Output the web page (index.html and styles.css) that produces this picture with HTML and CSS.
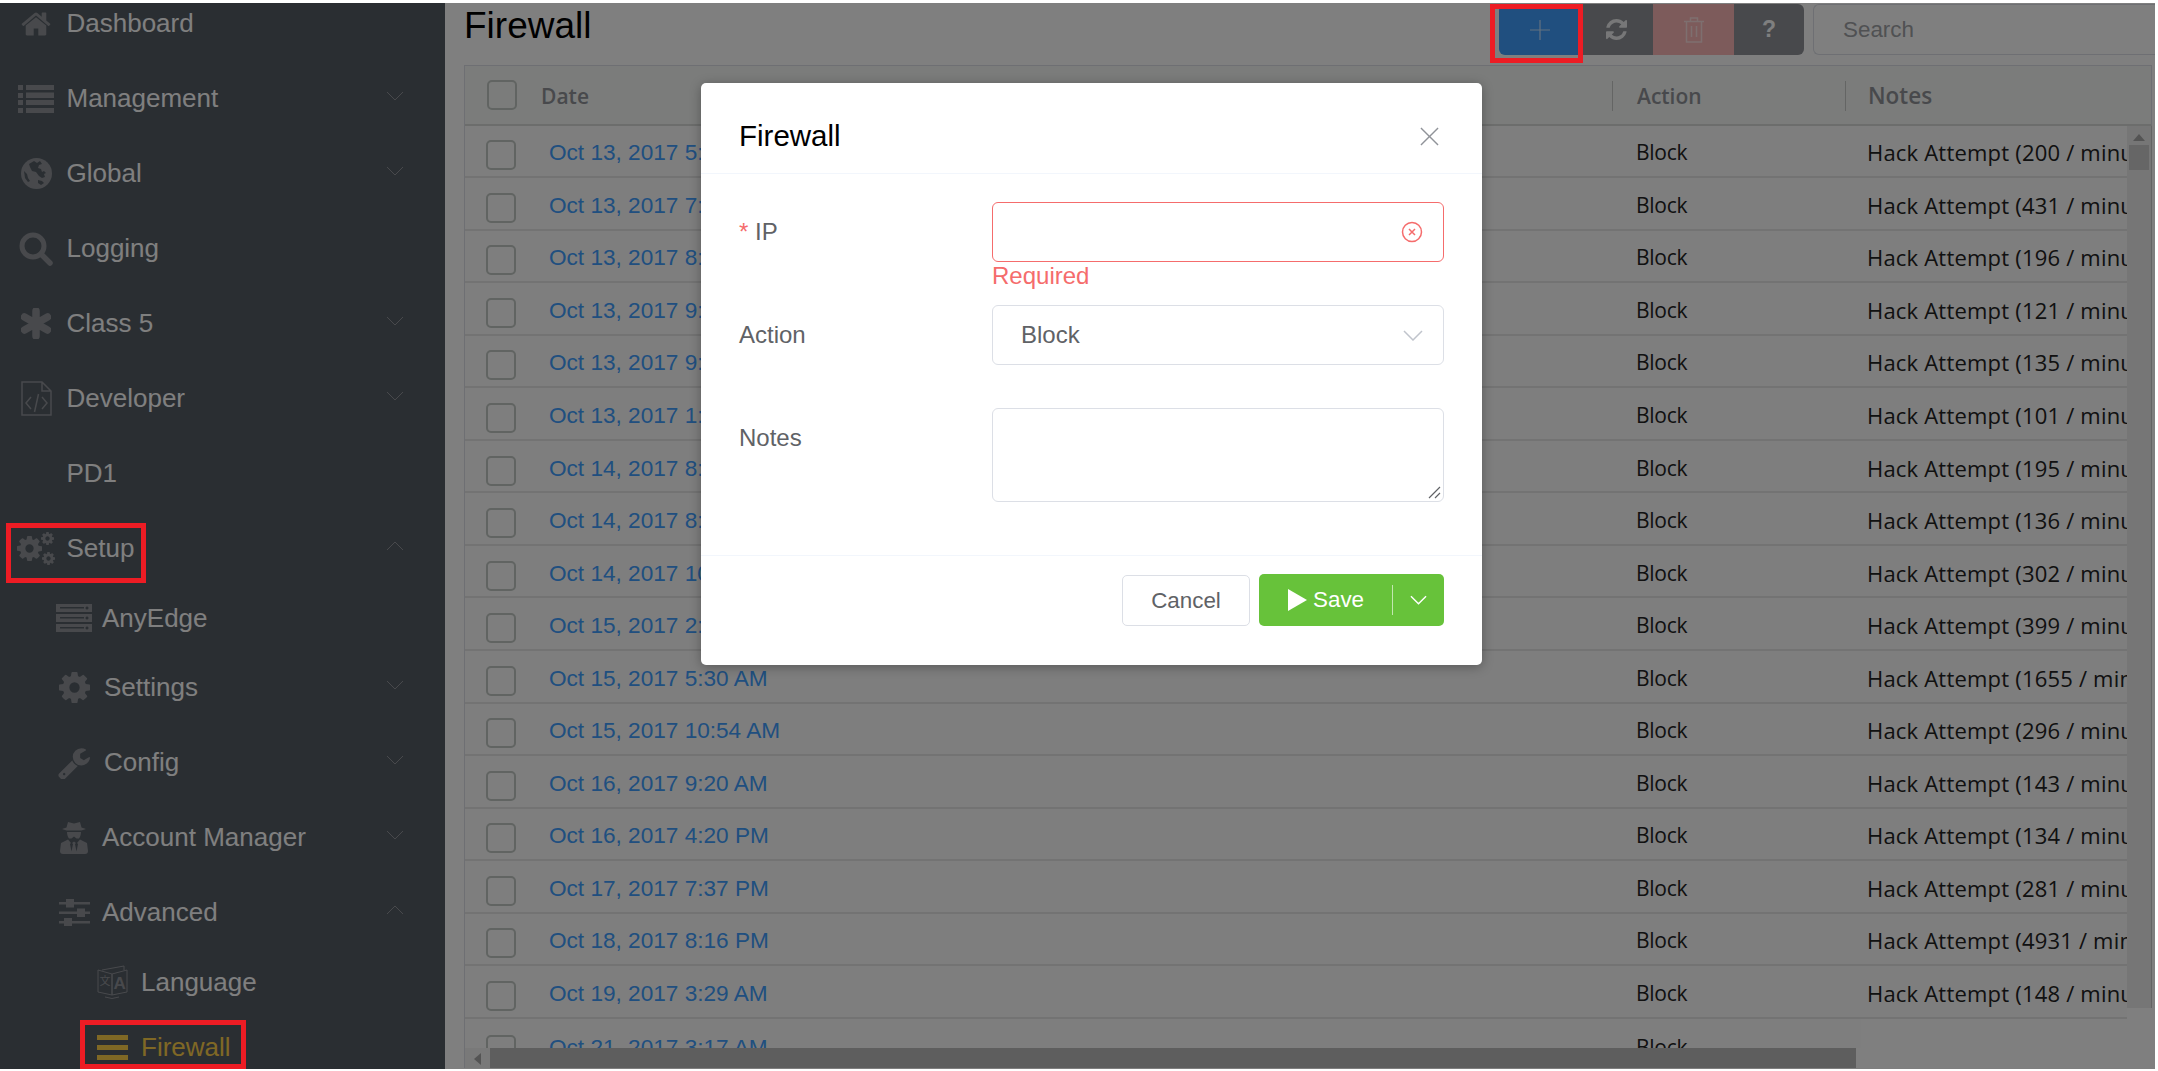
FILE: index.html
```html
<!DOCTYPE html>
<html>
<head>
    <meta charset="UTF-8">
    <meta name="viewport" content="width=device-width, initial-scale=1.0">
    <title>Firewall</title>

    <link rel="stylesheet" href="styles.css">
</head>

<body>
    <svg class="defs" aria-hidden="true">
        <symbol id="gear" viewBox="128 128 1536 1536"><path d="M1152 896q0-106-75-181t-181-75-181 75-75 181 75 181 181 75 181-75 75-181zm512-109v222q0 12-8 23t-20 13l-185 28q-19 54-39 91 35 50 107 138 10 12 10 25t-9 23q-27 37-99 108t-94 71q-12 0-26-9l-138-108q-44 23-91 38-16 136-29 186-7 28-36 28h-222q-14 0-24.5-8.5t-11.5-21.5l-28-184q-49-16-90-37l-141 107q-10 9-25 9-14 0-25-11-126-114-165-168-7-10-7-23 0-12 8-23 15-21 51-66.5t54-70.5q-27-50-41-99l-183-27q-13-2-21-12.5t-8-23.5v-222q0-12 8-23t19-13l186-28q14-46 39-92-40-57-107-138-10-12-10-24 0-10 9-23 26-36 98.5-107.5t94.5-71.5q13 0 26 10l138 107q44-23 91-38 16-136 29-186 7-28 36-28h222q14 0 24.5 8.5t11.5 21.5l28 184q49 16 90 37l142-107q9-9 24-9 13 0 25 10 129 119 165 170 7 8 7 22 0 12-8 23-15 21-51 66.5t-54 70.5q26 50 41 98l183 28q13 2 21 12.5t8 23.5z"/></symbol>
        <symbol id="chev-down" viewBox="0 0 18 10"><path d="M1 1l8 8 8-8" fill="none" stroke="currentColor" stroke-width="1"/></symbol>
        <symbol id="chev-up" viewBox="0 0 18 10"><path d="M1 9l8-8 8 8" fill="none" stroke="currentColor" stroke-width="1"/></symbol>
    </svg>

    <div class="page">
        <nav class="sidebar">
            <ul class="menu">
                <li class="menu-row">
                    <span class="icon"><svg width="32" height="32" viewBox="0 128 1792 1536"><path d="M1472 992v480q0 26-19 45t-45 19h-384v-384h-256v384h-384q-26 0-45-19t-19-45v-480q0-1 .5-3t.5-3l575-474 575 474q1 2 1 6zm223-69l-62 74q-8 9-21 11h-3q-13 0-21-7l-692-577-692 577q-12 8-24 7-13-2-21-11l-62-74q-8-10-7-23.5t11-21.5l719-599q32-26 76-26t76 26l244 204v-195q0-14 9-23t23-9h192q14 0 23 9t9 23v408l219 182q10 8 11 21.5t-7 23.5z"/></svg></span>
                    Dashboard
                </li>
                <li class="menu-row">
                    <span class="icon"><svg width="36" height="28" viewBox="0 0 36 28"><path d="M0 0h5v5H0zM8 0h28v5H8zM0 8h5v5H0zM8 7.500h28v5.500H8zM0 15h5v5H0zM8 15h28v5H8zM0 23h5v5H0zM8 23h28v5H8z"/></svg></span>
                    Management
                    <svg class="chev"><use href="#chev-down"/></svg>
                </li>
                <li class="menu-row">
                    <span class="icon"><svg width="31" height="31" viewBox="0 0 31 31"><circle cx="15.500" cy="15.500" r="15.500"/><path class="cut" d="M8 6l5-3 3 2 3-2 2 3-3 1-1 3 3 1 1 3 2-1 2 2-2 1 1 3-3 1-3-2-3-4-4-1-2-4zM17 22l4 1 2 2-3 2-3-2zM3 13l3 3 1 4 2 3-2 1-3-4z"/></svg></span>
                    Global
                    <svg class="chev"><use href="#chev-down"/></svg>
                </li>
                <li class="menu-row">
                    <span class="icon"><svg width="34" height="34" viewBox="0 0 34 34"><circle cx="14" cy="14" r="11" fill="none" stroke-width="5"/><path d="M22 22l9 9" fill="none" stroke-width="5.500" stroke-linecap="round"/></svg></span>
                    Logging
                </li>
                <li class="menu-row">
                    <span class="icon"><svg width="30" height="31" viewBox="0 0 30 31"><path d="M15 3v25M3.500 9l23 13M26.500 9l-23 13" fill="none" stroke-width="7.500" stroke-linecap="round"/></svg></span>
                    Class 5
                    <svg class="chev"><use href="#chev-down"/></svg>
                </li>
                <li class="menu-row">
                    <span class="icon"><svg width="31" height="35" viewBox="0 0 31 35"><path class="line" d="M1 1h20l9 9v24H1zM21 1v9h9M10 16l-5 6 5 6M21 16l5 6-5 6M17.500 13l-4 18"/></svg></span>
                    Developer
                    <svg class="chev"><use href="#chev-down"/></svg>
                </li>
                <li class="menu-row">
                    <span class="icon"></span>
                    PD1
                </li>
                <li class="menu-row">
                    <span class="icon"><svg width="38" height="34" viewBox="0 0 38 34"><use href="#gear" x="0" y="4" width="25" height="25"/><use href="#gear" x="24" y="0" width="13" height="13"/><use href="#gear" x="25" y="20" width="13" height="13"/></svg></span>
                    Setup
                    <svg class="chev"><use href="#chev-up"/></svg>
                </li>
                <li class="menu-row level2 leaf">
                    <span class="icon"><svg width="36" height="28" viewBox="0 0 36 28"><path fill-rule="evenodd" d="M0 0h36v8H0zM4 3v1.500h24V3zM31 2.500a1.500 1.500 0 1 0 .01 0zM0 10h36v8H0zM4 13v1.500h24V13zM31 12.500a1.500 1.500 0 1 0 .01 0zM0 20h36v8H0zM4 23v1.500h24V23zM31 22.500a1.500 1.500 0 1 0 .01 0z"/></svg></span>
                    AnyEdge
                </li>
                <li class="menu-row level2 wide">
                    <span class="icon"><svg width="31" height="31"><use href="#gear"/></svg></span>
                    Settings
                    <svg class="chev"><use href="#chev-down"/></svg>
                </li>
                <li class="menu-row level2 wide">
                    <span class="icon"><svg width="32" height="32" viewBox="64 64 1664 1664"><path d="M448 1472q0-26-19-45t-45-19-45 19-19 45 19 45 45 19 45-19 19-45zm644-420l-682 682q-37 37-90 37-52 0-91-37l-106-108q-38-36-38-90 0-53 38-91l681-681q39 98 114.500 173.500t173.500 114.500zm634-435q0 39-23 106-47 134-164.500 217.500t-258.500 83.500q-185 0-316.500-131.500t-131.500-316.500 131.500-316.500 316.500-131.500q58 0 121.500 16.500t107.500 46.500q16 11 16 28t-16 28l-293 169v224l193 107q5-3 79-48.500t135.500-81 70.500-35.500q15 0 23.500 10t8.500 25z"/></svg></span>
                    Config
                    <svg class="chev"><use href="#chev-down"/></svg>
                </li>
                <li class="menu-row level2">
                    <span class="icon"><svg width="28" height="33" viewBox="0 0 28 33"><path d="M8 1l6 1.500L20 1l1.500 5.500L26 8l-4.500 1.500h-15L2 8l4.500-1.500z"/><path d="M7 11h14c0 1.500-.5 5-2 6.500h-2.500L14 15.500l-2.500 2H9C7.500 16 7 12.500 7 11z"/><path fill-rule="evenodd" d="M8 18.500L1 22l-1 8q0 3 3 3h22q3 0 3-3l-1-8-7-3.500-3 3.500 1 1-1.500 7.500-1.500-7.500 1-1-2-1.500-2 1.500 1 1-1.500 7.500-1.500-7.500 1-1z"/></svg></span>
                    Account Manager
                    <svg class="chev"><use href="#chev-down"/></svg>
                </li>
                <li class="menu-row level2">
                    <span class="icon"><svg width="31" height="27" viewBox="0 0 31 27"><path d="M0 3h7V0h8v3h16v2.500H15v3H7v-3H0zM0 12.500h18V9.500h8v3h5V15h-5v3h-8v-3H0zM0 22h5v-3h8v3h18v2.500H13v2.500H5v-2.500H0z"/></svg></span>
                    Advanced
                    <svg class="chev"><use href="#chev-up"/></svg>
                </li>
                <li class="menu-row level3 leaf">
                    <span class="icon"><svg class="lang" width="31" height="35" viewBox="0 0 31 35"><path class="line" d="M1 5l14 4v21L1 27zM15 9l15-4 0 22-15 3zM5 5L27 1v4"/><path class="line" d="M8 32q7 3 14 0"/><text x="16.500" y="24" class="lang-a">A</text><text x="2.500" y="20" class="lang-z">文</text></svg></span>
                    Language
                </li>
                <li class="menu-row level3 leaf active">
                    <span class="icon"><svg width="31" height="25" viewBox="0 0 31 25"><path d="M0 0h31v5H0zM0 10h31v5H0zM0 20h31v5H0z"/></svg></span>
                    Firewall
                </li>
            </ul>
        </nav>

        <main class="content">
            <header class="topbar">
                <h1>Firewall</h1>
                <div class="btn-group">
                    <button class="tool add"><svg width="22" height="22" viewBox="0 0 22 22"><path d="M11 1v20M1 11h20" stroke="#fff" stroke-opacity="0.7" stroke-width="1.200"/></svg></button>
                    <button class="tool plain refresh"><svg width="21" height="21" viewBox="128 128 1536 1536"><path fill="#fff" fill-opacity="0.85" d="M1639 1056q0 5-1 7-64 268-268 434.500t-478 166.500q-146 0-282.500-55t-243.500-157l-129 129q-19 19-45 19t-45-19-19-45v-448q0-26 19-45t45-19h448q26 0 45 19t19 45-19 45l-137 137q71 66 161 102t187 36q134 0 250-65t186-179q11-17 53-117 8-23 30-23h192q13 0 22.500 9.500t9.500 22.500zm25-800v448q0 26-19 45t-45 19h-448q-26 0-45-19t-19-45 19-45l138-138q-148-137-349-137-134 0-250 65t-186 179q-11 17-53 117-8 23-30 23h-199q-13 0-22.500-9.500t-9.500-22.500v-7q65-268 270-434.500t480-166.500q146 0 284 55.500t245 156.500l130-129q19-19 45-19t45 19 19 45z"/></svg></button>
                    <button class="tool trash"><svg width="20" height="26" viewBox="0 0 20 26"><path d="M0 4.500h20M6.500 4.500V1h7v3.500M2.500 4.500V25h15V4.500M7.500 9v11M12.500 9v11" fill="none" stroke="#fff" stroke-opacity="0.55" stroke-width="1.500"/></svg></button>
                    <button class="tool plain help">?</button>
                </div>
                <input class="search" type="text" placeholder="Search">
            </header>

            <section class="table">
                <div class="row head">
                    <span class="cell-check"><span class="check"></span></span>
                    <span class="cell-date">Date</span>
                    <span class="cell-action">Action</span>
                    <span class="cell-notes">Notes</span>
                </div>
                <div class="table-body">
                    <div class="rows">
                        <div class="row"><span class="cell-check"><span class="check"></span></span><a class="cell-date">Oct 13, 2017 5:12 AM</a><span class="cell-action">Block</span><span class="cell-notes">Hack Attempt (200 / minute)</span></div>
                        <div class="row"><span class="cell-check"><span class="check"></span></span><a class="cell-date">Oct 13, 2017 7:41 AM</a><span class="cell-action">Block</span><span class="cell-notes">Hack Attempt (431 / minute)</span></div>
                        <div class="row"><span class="cell-check"><span class="check"></span></span><a class="cell-date">Oct 13, 2017 8:03 AM</a><span class="cell-action">Block</span><span class="cell-notes">Hack Attempt (196 / minute)</span></div>
                        <div class="row"><span class="cell-check"><span class="check"></span></span><a class="cell-date">Oct 13, 2017 9:10 AM</a><span class="cell-action">Block</span><span class="cell-notes">Hack Attempt (121 / minute)</span></div>
                        <div class="row"><span class="cell-check"><span class="check"></span></span><a class="cell-date">Oct 13, 2017 9:47 AM</a><span class="cell-action">Block</span><span class="cell-notes">Hack Attempt (135 / minute)</span></div>
                        <div class="row"><span class="cell-check"><span class="check"></span></span><a class="cell-date">Oct 13, 2017 1:22 PM</a><span class="cell-action">Block</span><span class="cell-notes">Hack Attempt (101 / minute)</span></div>
                        <div class="row"><span class="cell-check"><span class="check"></span></span><a class="cell-date">Oct 14, 2017 8:05 AM</a><span class="cell-action">Block</span><span class="cell-notes">Hack Attempt (195 / minute)</span></div>
                        <div class="row"><span class="cell-check"><span class="check"></span></span><a class="cell-date">Oct 14, 2017 8:36 AM</a><span class="cell-action">Block</span><span class="cell-notes">Hack Attempt (136 / minute)</span></div>
                        <div class="row"><span class="cell-check"><span class="check"></span></span><a class="cell-date">Oct 14, 2017 10:18 AM</a><span class="cell-action">Block</span><span class="cell-notes">Hack Attempt (302 / minute)</span></div>
                        <div class="row"><span class="cell-check"><span class="check"></span></span><a class="cell-date">Oct 15, 2017 2:44 AM</a><span class="cell-action">Block</span><span class="cell-notes">Hack Attempt (399 / minute)</span></div>
                        <div class="row"><span class="cell-check"><span class="check"></span></span><a class="cell-date">Oct 15, 2017 5:30 AM</a><span class="cell-action">Block</span><span class="cell-notes">Hack Attempt (1655 / minute)</span></div>
                        <div class="row"><span class="cell-check"><span class="check"></span></span><a class="cell-date">Oct 15, 2017 10:54 AM</a><span class="cell-action">Block</span><span class="cell-notes">Hack Attempt (296 / minute)</span></div>
                        <div class="row"><span class="cell-check"><span class="check"></span></span><a class="cell-date">Oct 16, 2017 9:20 AM</a><span class="cell-action">Block</span><span class="cell-notes">Hack Attempt (143 / minute)</span></div>
                        <div class="row"><span class="cell-check"><span class="check"></span></span><a class="cell-date">Oct 16, 2017 4:20 PM</a><span class="cell-action">Block</span><span class="cell-notes">Hack Attempt (134 / minute)</span></div>
                        <div class="row"><span class="cell-check"><span class="check"></span></span><a class="cell-date">Oct 17, 2017 7:37 PM</a><span class="cell-action">Block</span><span class="cell-notes">Hack Attempt (281 / minute)</span></div>
                        <div class="row"><span class="cell-check"><span class="check"></span></span><a class="cell-date">Oct 18, 2017 8:16 PM</a><span class="cell-action">Block</span><span class="cell-notes">Hack Attempt (4931 / minute)</span></div>
                        <div class="row"><span class="cell-check"><span class="check"></span></span><a class="cell-date">Oct 19, 2017 3:29 AM</a><span class="cell-action">Block</span><span class="cell-notes">Hack Attempt (148 / minute)</span></div>
                        <div class="row last"><span class="cell-check"><span class="check"></span></span><a class="cell-date">Oct 21, 2017 3:17 AM</a><span class="cell-action">Block</span></div>
                    </div>
                    <div class="vbar">
                        <span class="vbar-arrow"></span>
                        <span class="vbar-thumb"></span>
                    </div>
                </div>
                <div class="hbar">
                    <span class="hbar-arrow"></span>
                    <span class="hbar-thumb"></span>
                </div>
            </section>
        </main>

        <div class="overlay"></div>

        <div class="modal">
            <div class="modal-head">
                <span class="modal-title">Firewall</span>
                <svg width="19" height="19" viewBox="0 0 20 20"><path d="M1 1l18 18M19 1L1 19" stroke="#909399" stroke-width="1.500"/></svg>
            </div>
            <div class="modal-body">
                <div class="form-item error">
                    <label><span class="star">*</span> IP</label>
                    <div>
                        <div class="field">
                            <span class="err-icon"><svg width="22" height="22" viewBox="0 0 22 22"><circle cx="11" cy="11" r="9.500" fill="none" stroke="#f56c6c" stroke-width="1.500"/><path d="M8 8l6 6M14 8l-6 6" stroke="#f56c6c" stroke-width="1.500"/></svg></span>
                        </div>
                        <div class="message">Required</div>
                    </div>
                </div>
                <div class="form-item">
                    <label>Action</label>
                    <div class="field select">
                        <span>Block</span>
                        <svg width="20" height="11" viewBox="0 0 20 11"><path d="M1 1l9 9 9-9" fill="none" stroke="#c0c4cc" stroke-width="1.500"/></svg>
                    </div>
                </div>
                <div class="form-item">
                    <label>Notes</label>
                    <div class="field area">
                        <svg width="13" height="13" viewBox="0 0 13 13"><path d="M1 12L12 1M7 12l5-5" stroke="#606266" stroke-width="1.200"/></svg>
                    </div>
                </div>
            </div>
            <div class="modal-foot">
                <button class="btn cancel">Cancel</button>
                <button class="btn save">
                    <svg width="19" height="22" viewBox="0 0 19 22"><path d="M0 0l19 11L0 22z" fill="#fff"/></svg>
                    <span class="save-label">Save</span>
                    <span class="save-split"></span>
                    <svg width="17" height="10" viewBox="0 0 18 10"><path d="M1 1l8 8 8-8" fill="none" stroke="#fff" stroke-width="1.500"/></svg>
                </button>
            </div>
        </div>

        <!-- red boxes drawn on the screenshot -->
        <div class="mark mark-add"></div>
        <div class="mark mark-setup"></div>
        <div class="mark mark-firewall"></div>
    </div>
</body>
</html>
```

FILE: styles.css
```css
* {
    box-sizing: border-box;
}

html,
body {
    height: 100%;
}

body {
    margin: 0;
    background-color: #fff;
    font-family: "Liberation Sans", Arial, sans-serif;
    overflow: hidden;
}

.defs {
    display: none;
}

.page {
    position: relative;
    display: flex;
    width: 2155px;
    height: 1066px;
    margin-top: 3px;
    overflow: hidden;
}

/* sidebar */
.sidebar {
    flex: 0 0 445px;
    background-color: #545c64;
    overflow: hidden;
}

.menu {
    list-style: none;
    margin: -17px 0 0;
    padding: 0;
}

.menu-row {
    display: flex;
    align-items: center;
    height: 75px;
    padding: 0 41px 0 18px;
    color: #fff;
    font-size: 26px;
}

.menu-row .icon {
    display: flex;
    flex: 0 0 36px;
    align-items: center;
    justify-content: center;
    min-width: 0;
    height: 36px;
    margin-right: 12.5px;
}

.icon svg {
    flex: none;
    fill: #909399;
    stroke: #909399;
    stroke-width: 0;
}

.icon .cut {
    fill: #545c64;
}

.icon .line {
    fill: none;
    stroke-width: 1.500px;
}

.icon .lang .line {
    stroke-width: 1px;
}

.lang-a {
    font: bold 17px "Liberation Sans", sans-serif;
}

.lang-z {
    font: 11px "Noto Sans CJK JP", sans-serif;
}

.chev {
    width: 18px;
    height: 10px;
    margin: 0 0 6px auto;
    color: #909399;
}

.level2 {
    padding-left: 56px;
}

.level2 .icon {
    margin-right: 10px;
}

.level2.wide .icon {
    margin-right: 12px;
}

.level3 {
    padding-left: 94px;
}

.level3 .icon {
    margin-right: 11px;
}

.leaf {
    height: 64px;
}

.active {
    height: 67px;
    color: #ffd04b;
}

.active .icon svg {
    fill: #ffd04b;
}

/* main area */
.content {
    flex: 1;
    min-width: 0;
    padding-left: 19px;
}

.topbar {
    display: flex;
    height: 62px;
    padding-top: 1px;
}

.topbar h1 {
    margin: -1px auto 0 0;
    color: #000;
    font-size: 37px;
    font-weight: normal;
    line-height: 46px;
}

.btn-group {
    display: flex;
    height: 51px;
}

.tool {
    display: flex;
    align-items: center;
    justify-content: center;
    padding: 0;
    border: none;
    color: #fff;
}

.add {
    width: 81px;
    border-radius: 6px 0 0 6px;
    background-color: #409eff;
}

.plain {
    background-color: #909399;
}

.refresh {
    width: 73px;
}

.trash {
    width: 81px;
    background-color: #fab6b6;
}

.help {
    width: 70px;
    border-radius: 0 6px 6px 0;
    font-family: "Liberation Sans", sans-serif;
    font-size: 23px;
    font-weight: bold;
}

.search {
    width: 342px;
    height: 51px;
    margin-left: 9px;
    padding: 0 29px;
    border: 1px solid #dcdfe6;
    border-right: none;
    border-radius: 6px 0 0 6px;
    font-family: "Liberation Sans", sans-serif;
    font-size: 22.4px;
}

.search::placeholder {
    color: #a0a2a6;
}

/* table */
.table {
    width: 1688px;
    border-top: 1px solid #dcdfe6;
    border-left: 1px solid #dcdfe6;
}

.row {
    display: grid;
    grid-template-columns: 84px 1063px 233px 282px;
    align-items: center;
    width: 1662px;
    height: 52.56px;
    padding-top: 3px;
    border-bottom: 2px solid #e6e6e6;
    background-color: #fcfcfc;
    font-family: "Open Sans", sans-serif;
    font-size: 21px;
    letter-spacing: -0.25px;
    color: #222;
    white-space: nowrap;
}

.row.head {
    width: 1687px;
    height: 59.5px;
    border-bottom: 2px solid #d8dad8;
    border-right: 1px solid #dcdfe6;
    background-color: #f6f9f6;
    color: #909399;
    font-weight: 600;
    letter-spacing: 0;
}

.head .cell-date {
    margin-left: -8px;
}

.head .check {
    margin: -3px 0 0 22px;
}

.head .cell-action,
.head .cell-notes {
    border-left: 1px solid #c8cac8;
    line-height: 30px;
}

.head .cell-notes {
    font-size: 22.5px;
    letter-spacing: 0;
}

.cell-check {
    display: flex;
}

.check {
    width: 30px;
    height: 30px;
    margin: 6px 0 0 21px;
    border: 2.500px solid #c2c8c4;
    border-radius: 5px;
    background-color: transparent;
}

a.cell-date {
    padding-top: 2px;
    color: #409eff;
    font-family: "Liberation Sans", sans-serif;
    font-size: 22.6px;
    letter-spacing: 0;
}

.cell-action {
    padding-left: 24px;
}

.cell-notes {
    padding-left: 22px;
    font-size: 22px;
    letter-spacing: 0.2px;
    overflow: hidden;
}

.row.last {
    width: 1396px;
    border-bottom: none;
    overflow: hidden;
}

.table-body {
    display: flex;
    height: 922px;
    overflow: hidden;
}

.rows {
    flex: 0 0 1662px;
}

.vbar {
    flex: 0 0 25px;
    height: 882px;
    padding: 8px 2px 0;
    border-right: 1px solid #c8c8c8;
    background-color: #ececec;
}

.vbar-arrow {
    display: block;
    width: 0;
    margin: 0 auto;
    border: 6px solid transparent;
    border-top: none;
    border-bottom: 7px solid #a8a8a8;
}

.vbar-thumb {
    display: block;
    height: 25px;
    margin-top: 4px;
    background-color: #cdcdcd;
}

.hbar {
    display: flex;
    width: 1391px;
    height: 20px;
}

.hbar-arrow {
    position: relative;
    flex: 0 0 25px;
    background-color: #f2f2f2;
}

.hbar-arrow::before {
    content: "";
    position: absolute;
    top: 5px;
    left: 9px;
    border: 6px solid transparent;
    border-left: none;
    border-right: 7px solid #a8a8a8;
}

.hbar-thumb {
    flex: 1;
    background-color: #bdbdbd;
}

/* modal */
.overlay {
    position: absolute;
    inset: 0;
    background-color: rgba(0, 0, 0, 0.5);
}

.modal {
    position: absolute;
    top: 80px;
    left: 701px;
    width: 781px;
    border-radius: 5px;
    background-color: #fff;
    box-shadow: 0 2px 12px rgba(0, 0, 0, 0.3);
}

.modal-head {
    display: flex;
    align-items: center;
    justify-content: space-between;
    height: 91px;
    padding: 16px 43px 0 38px;
    border-bottom: 1px solid #f2f6fc;
}

.modal-title {
    color: #000;
    font-size: 29.5px;
}

.modal-body {
    padding: 28px 38px 10px;
}

.form-item {
    display: grid;
    grid-template-columns: 253px 452px;
    margin-bottom: 43px;
    color: #606266;
    font-size: 24px;
}

.form-item.error {
    margin-bottom: 0;
}

.form-item label {
    line-height: 60px;
}

.star {
    color: #f56c6c;
}

.field {
    display: flex;
    align-items: center;
    height: 60px;
    border: 1px solid #dcdfe6;
    border-radius: 6px;
}

.error .field {
    justify-content: flex-end;
    padding-right: 20px;
    border-color: #f56c6c;
}

.err-icon {
    display: flex;
}

.message {
    height: 43px;
    color: #f56c6c;
    font-size: 24px;
    line-height: 28px;
}

.select {
    justify-content: space-between;
    padding: 0 20px 0 28px;
}

.area {
    align-items: flex-end;
    justify-content: flex-end;
    height: 94px;
    padding: 0 2px 2px 0;
}

.modal-foot {
    display: flex;
    align-items: flex-end;
    justify-content: flex-end;
    gap: 9px;
    height: 110px;
    padding: 0 38px 39px;
    border-top: 1px solid #f2f6fc;
}

.btn {
    height: 51px;
    padding: 0;
    border-radius: 5px;
    font-family: "Liberation Sans", sans-serif;
    font-size: 22.4px;
}

.cancel {
    width: 128px;
    border: 1px solid #dcdfe6;
    background-color: #fff;
    color: #606266;
}

.save {
    display: flex;
    align-items: center;
    width: 185px;
    height: 52px;
    padding-left: 29px;
    border: none;
    background-color: #67c23a;
    color: #fff;
}

.save-label {
    margin-left: 6px;
}

.save-split {
    width: 1px;
    height: 30px;
    margin: 0 17px 0 28px;
    background-color: #fff;
    opacity: 0.6;
}

/* annotations */
.mark {
    position: absolute;
    border: 5px solid #ed1c24;
}

.mark-add {
    top: 1px;
    left: 1490px;
    width: 93px;
    height: 59px;
}

.mark-setup {
    top: 520px;
    left: 6px;
    width: 140px;
    height: 60px;
}

.mark-firewall {
    top: 1017px;
    left: 80px;
    width: 166px;
    height: 49px;
}
```
